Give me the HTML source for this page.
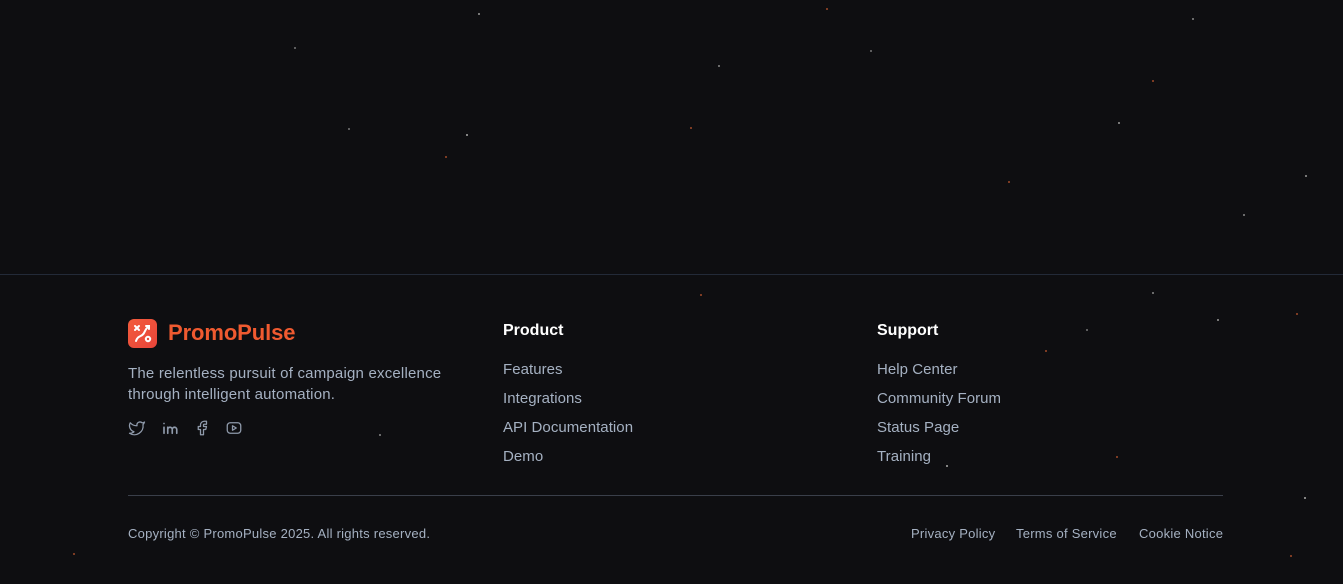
<!DOCTYPE html>
<html><head><meta charset="utf-8"><style>
*{margin:0;padding:0;box-sizing:border-box}
body{width:1343px;height:584px;background:#0e0e11;font-family:"Liberation Sans",sans-serif;position:relative;overflow:hidden}
.line{position:absolute;left:0;right:0;top:274px;height:1px;background:#232a38}
.dot{position:absolute;width:2px;height:2px;border-radius:1px}
.logo{position:absolute;left:128px;top:319px;width:29px;height:29px;border-radius:6px;background:linear-gradient(135deg,#f25c3c,#e8443a)}
.brand{position:absolute;left:168px;top:320px;font-size:22px;font-weight:bold;color:#f05a30;letter-spacing:-0.1px}
.desc{position:absolute;left:128px;top:363px;font-size:15px;line-height:21px;color:#a5b1c2;letter-spacing:0.2px}
.h{position:absolute;top:322px;font-size:16px;font-weight:bold;color:#fff}
.lk{position:absolute;font-size:15px;color:#a5b1c2;letter-spacing:0.05px}
.hr{position:absolute;left:128px;width:1095px;top:495px;height:1px;background:#3a3f4a}
.sm{position:absolute;top:526px;font-size:13px;color:#a5b1c2;letter-spacing:0.25px}
svg.i{position:absolute;top:419px;width:18px;height:18px;fill:none;stroke:#8f9aab;stroke-width:1.7;stroke-linecap:round;stroke-linejoin:round}
</style></head><body>
<div class="line"></div>
<div class="dot" style="left:294px;top:47px;background:#777"></div>
<div class="dot" style="left:478px;top:13px;background:#999"></div>
<div class="dot" style="left:466px;top:134px;background:#aaa"></div>
<div class="dot" style="left:445px;top:156px;background:#a04a2a"></div>
<div class="dot" style="left:690px;top:127px;background:#a04a2a"></div>
<div class="dot" style="left:718px;top:65px;background:#888"></div>
<div class="dot" style="left:1118px;top:122px;background:#999"></div>
<div class="dot" style="left:1305px;top:175px;background:#999"></div>
<div class="dot" style="left:1192px;top:18px;background:#888"></div>
<div class="dot" style="left:1008px;top:181px;background:#a04a2a"></div>
<div class="dot" style="left:1217px;top:319px;background:#999"></div>
<div class="dot" style="left:1152px;top:292px;background:#888"></div>
<div class="dot" style="left:946px;top:465px;background:#aaa"></div>
<div class="dot" style="left:379px;top:434px;background:#888"></div>
<div class="dot" style="left:1304px;top:497px;background:#aaa"></div>
<div class="dot" style="left:700px;top:294px;background:#a04a2a"></div>
<div class="dot" style="left:1296px;top:313px;background:#a04a2a"></div>
<div class="dot" style="left:73px;top:553px;background:#a04a2a"></div>
<div class="dot" style="left:826px;top:8px;background:#a04a2a"></div>
<div class="dot" style="left:1243px;top:214px;background:#888"></div>
<div class="dot" style="left:1152px;top:80px;background:#a04a2a"></div>
<div class="dot" style="left:348px;top:128px;background:#777"></div>
<div class="dot" style="left:870px;top:50px;background:#777"></div>
<div class="dot" style="left:1045px;top:350px;background:#a04a2a"></div>
<div class="dot" style="left:1086px;top:329px;background:#777"></div>
<div class="dot" style="left:1116px;top:456px;background:#a04a2a"></div>
<div class="dot" style="left:1290px;top:555px;background:#a04a2a"></div>
<div class="logo"><svg width="29" height="29" viewBox="0 0 29 29" fill="none" stroke="#fff" stroke-width="2" stroke-linecap="round"><path d="M7 7l4 4M11 7l-4 4"/><path d="M8 22c2-6 6-4 8-8s3-6 5-6M18 7h3v3"/><circle cx="20" cy="20" r="2.2"/></svg></div>
<div class="brand">PromoPulse</div>
<div class="desc">The relentless pursuit of campaign excellence<br>through intelligent automation.</div>
<svg class="i" style="left:128px" viewBox="0 0 24 24"><path d="M22 4s-.7 2.1-2 3.4c1.6 10-9.4 17.3-18 11.6 2.2.1 4.4-.6 6-2C3 15.5.5 9.6 3 5c2.2 2.6 5.6 4.1 9 4-.9-4.2 4-6.6 7-3.8 1.1 0 3-1.2 3-1.2z"/></svg>
<svg class="i" style="left:161px" viewBox="0 0 24 24" style="stroke-width:2"><path d="M4 11v8M4 6v.01M9 19v-8M9 14a3 3 0 0 1 6 0v5M15 14a3 3 0 0 1 6 0v5" stroke-width="2.2"/></svg>
<svg class="i" style="left:193px" viewBox="0 0 24 24"><path d="M7 10v4h3v7h4v-7h3l1-4h-4V8a1 1 0 0 1 1-1h3V3h-3a5 5 0 0 0-5 5v2H7"/></svg>
<svg class="i" style="left:225px" viewBox="0 0 24 24"><rect x="3" y="5" width="18" height="14" rx="4"/><path d="M10 9l5 3-5 3z"/></svg>
<div class="h" style="left:503px">Product</div>
<div class="lk" style="left:503px;top:361px">Features</div>
<div class="lk" style="left:503px;top:390px">Integrations</div>
<div class="lk" style="left:503px;top:419px">API Documentation</div>
<div class="lk" style="left:503px;top:448px">Demo</div>
<div class="h" style="left:877px">Support</div>
<div class="lk" style="left:877px;top:361px">Help Center</div>
<div class="lk" style="left:877px;top:390px">Community Forum</div>
<div class="lk" style="left:877px;top:419px">Status Page</div>
<div class="lk" style="left:877px;top:448px">Training</div>
<div class="hr"></div>
<div class="sm" style="left:128px">Copyright © PromoPulse 2025. All rights reserved.</div>
<div class="sm" style="left:911px">Privacy Policy</div>
<div class="sm" style="left:1016px">Terms of Service</div>
<div class="sm" style="left:1139px">Cookie Notice</div>
</body></html>
